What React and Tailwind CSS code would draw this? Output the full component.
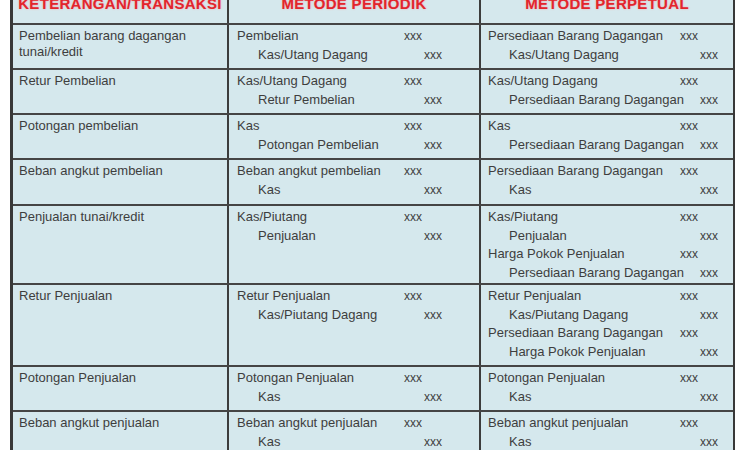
import React from "react";

const D = "d";
const C = "c";

const rows = [
  {
    label: ["Pembelian barang dagangan", "tunai/kredit"],
    per: [["Pembelian", D], ["Kas/Utang Dagang", C]],
    perp: [["Persediaan Barang Dagangan", D], ["Kas/Utang Dagang", C]],
    h: "h-[45px]",
  },
  {
    label: ["Retur Pembelian"],
    per: [["Kas/Utang Dagang", D], ["Retur Pembelian", C]],
    perp: [["Kas/Utang Dagang", D], ["Persediaan Barang Dagangan", C]],
    h: "h-[45px]",
  },
  {
    label: ["Potongan pembelian"],
    per: [["Kas", D], ["Potongan Pembelian", C]],
    perp: [["Kas", D], ["Persediaan Barang Dagangan", C]],
    h: "h-[45px]",
  },
  {
    label: ["Beban angkut pembelian"],
    per: [["Beban angkut pembelian", D], ["Kas", C]],
    perp: [["Persediaan Barang Dagangan", D], ["Kas", C]],
    h: "h-[46px]",
  },
  {
    label: ["Penjualan tunai/kredit"],
    per: [["Kas/Piutang", D], ["Penjualan", C]],
    perp: [
      ["Kas/Piutang", D],
      ["Penjualan", C],
      ["Harga Pokok Penjualan", D],
      ["Persediaan Barang Dagangan", C],
    ],
    h: "h-[79px]",
  },
  {
    label: ["Retur Penjualan"],
    per: [["Retur Penjualan", D], ["Kas/Piutang Dagang", C]],
    perp: [
      ["Retur Penjualan", D],
      ["Kas/Piutang Dagang", C],
      ["Persediaan Barang Dagangan", D],
      ["Harga Pokok Penjualan", C],
    ],
    h: "h-[82px]",
  },
  {
    label: ["Potongan Penjualan"],
    per: [["Potongan Penjualan", D], ["Kas", C]],
    perp: [["Potongan Penjualan", D], ["Kas", C]],
    h: "h-[45px]",
  },
  {
    label: ["Beban angkut penjualan"],
    per: [["Beban angkut penjualan", D], ["Kas", C]],
    perp: [["Beban angkut penjualan", D], ["Kas", C]],
    h: "h-[60px]",
  },
];

function Entries({ items, wide }) {
  return (
    <div className="flex flex-col">
      {items.map(([text, side], i) => (
        <div
          key={i}
          className={
            wide
              ? "grid grid-cols-[192px_20px_auto] leading-[18.5px] whitespace-nowrap"
              : "grid grid-cols-[167px_20px_auto] leading-[18.5px] whitespace-nowrap"
          }
        >
          <span className={side === C ? "pl-[21px]" : ""}>{text}</span>
          <span className="text-[12px]">{side === D ? "xxx" : ""}</span>
          <span className="text-[12px]">{side === C ? "xxx" : ""}</span>
        </div>
      ))}
    </div>
  );
}

const headText =
  "-mt-[4px] text-[15px] leading-[16px] font-bold tracking-[0.3px] text-[#e2252d] [text-shadow:0_0_2px_#f4a4a4]";

export default function App() {
  return (
    <div
      className="w-[750px] h-[450px] overflow-hidden bg-white pl-[10px]"
      style={{ fontFamily: '"Liberation Sans", Arial, sans-serif' }}
    >
      <div className="w-[725px] bg-[#d5e8ed] border-l-[3px] border-r-[2px] border-[#383838] text-[13px] text-[#3e3e3e]">
        <div className="grid grid-cols-[216px_252px_252px] h-[25px] border-b-2 border-[#454545]">
          <div className="flex justify-center items-start border-r-2 border-[#3c3c3c]">
            <span className={headText}>KETERANGAN/TRANSAKSI</span>
          </div>
          <div className="flex justify-center items-start border-r-2 border-[#3c3c3c]">
            <span className={headText}>METODE PERIODIK</span>
          </div>
          <div className="flex justify-center items-start">
            <span className={headText}>METODE PERPETUAL</span>
          </div>
        </div>
        {rows.map((r, i) => (
          <div
            key={i}
            className={`grid grid-cols-[216px_252px_252px] border-b-2 border-[#454545] ${r.h}`}
          >
            <div className="border-r-2 border-[#3c3c3c] pl-[6px] pt-[3px] leading-[16px]">
              {r.label.map((l, j) => (
                <div key={j}>{l}</div>
              ))}
            </div>
            <div className="border-r-2 border-[#3c3c3c] pl-[8px] pt-[2px]">
              <Entries items={r.per} />
            </div>
            <div className="pl-[7px] pt-[2px]">
              <Entries items={r.perp} wide />
            </div>
          </div>
        ))}
      </div>
    </div>
  );
}
